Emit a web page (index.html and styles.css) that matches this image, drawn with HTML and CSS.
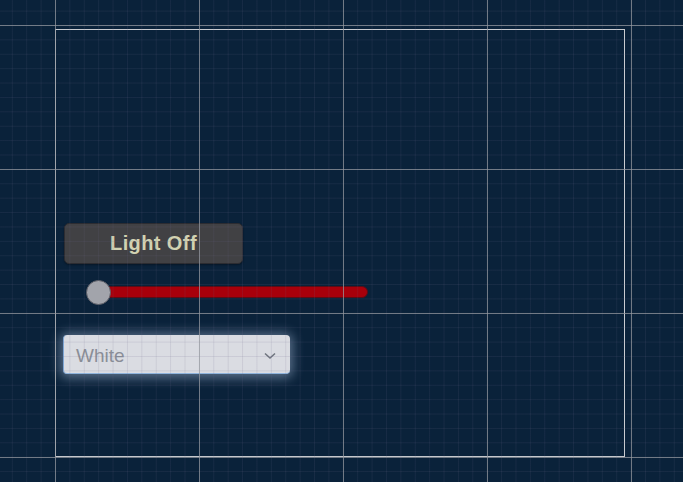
FILE: index.html
```html
<!DOCTYPE html>
<html lang="en">
<head>
<meta charset="utf-8">
<title>Canvas</title>
<link rel="stylesheet" href="styles.css">
</head>
<body>
<div class="canvas">
  <div class="ui">
    <button class="btn" type="button">Light Off</button>
    <div class="slider">
      <div class="handle"></div>
      <div class="track"></div>
    </div>
    <div class="dropdown">
      <span class="dd-label">White</span>
      <svg class="chev" width="12" height="8" viewBox="0 0 12 8"><polyline points="1,1.5 6,6 11,1.5" fill="none" stroke="#70757f" stroke-width="1.6"/></svg>
    </div>
  </div>
</div>
<div class="grid"></div>
</body>
</html>
```
FILE: styles.css
```css
html, body {
  margin: 0;
  padding: 0;
}
body {
  width: 683px;
  height: 482px;
  overflow: hidden;
  background: #0a223a;
  font-family: "Liberation Sans", Arial, sans-serif;
  padding: 29px 0 0 55px;
  box-sizing: border-box;
}
.grid {
  position: fixed;
  left: 0;
  top: 0;
  width: 683px;
  height: 482px;
  pointer-events: none;
  background-image:
    linear-gradient(to right, rgba(150,154,160,0.72) 1px, transparent 1px),
    linear-gradient(to bottom, rgba(150,154,160,0.72) 1px, transparent 1px),
    linear-gradient(to right, rgba(110,105,140,0.14) 1px, transparent 1px),
    linear-gradient(to bottom, rgba(110,105,140,0.14) 1px, transparent 1px);
  background-size: 144px 100%, 100% 144px, 14.4px 100%, 100% 14.4px;
  background-position: 55px 0, 0 25px, 55px 0, 0 25px;
}
.canvas {
  width: 570px;
  height: 428px;
  box-sizing: border-box;
  border: 1px solid #c9ccd1;
}
.ui {
  display: flex;
  flex-direction: column;
  align-items: flex-start;
  padding: 193px 0 0 8px;
}
.btn {
  width: 179px;
  height: 41px;
  margin: 0;
  padding: 0 0 1px 0;
  background: #414144;
  border: 1px solid #2c2c31;
  border-radius: 5px;
  color: #d2d2b2;
  font-family: "Liberation Sans", Arial, sans-serif;
  font-weight: bold;
  font-size: 20px;
  letter-spacing: 0.4px;
  box-shadow: 0 1px 2px rgba(0,0,0,0.35);
}
.slider {
  display: flex;
  align-items: center;
  width: 282px;
  height: 26px;
  margin: 15px 0 0 22px;
}
.handle {
  position: relative;
  z-index: 1;
  flex: none;
  width: 25px;
  height: 25px;
  box-sizing: border-box;
  border-radius: 50%;
  background: #a2a4ab;
  border: 1px solid #5b5d66;
}
.track {
  flex: 1;
  height: 12px;
  margin-left: -24px;
  box-sizing: border-box;
  background: #a8000b;
  border: 1px solid #5c0c16;
  border-radius: 6px;
}
.dropdown {
  display: flex;
  align-items: center;
  justify-content: space-between;
  width: 227px;
  height: 39px;
  margin: 30px 0 0 -1px;
  padding: 3px 14px 0 12px;
  box-sizing: border-box;
  background: #dadce2;
  border-radius: 4px;
  border-left: 1px solid #7fa6d4;
  border-bottom: 1px solid #8fb3dc;
  box-shadow: 0 1px 12px 3px rgba(190,210,240,0.45);
}
.dd-label {
  font-size: 19px;
  color: #8a8e97;
}
.chev {
  display: block;
}
```
